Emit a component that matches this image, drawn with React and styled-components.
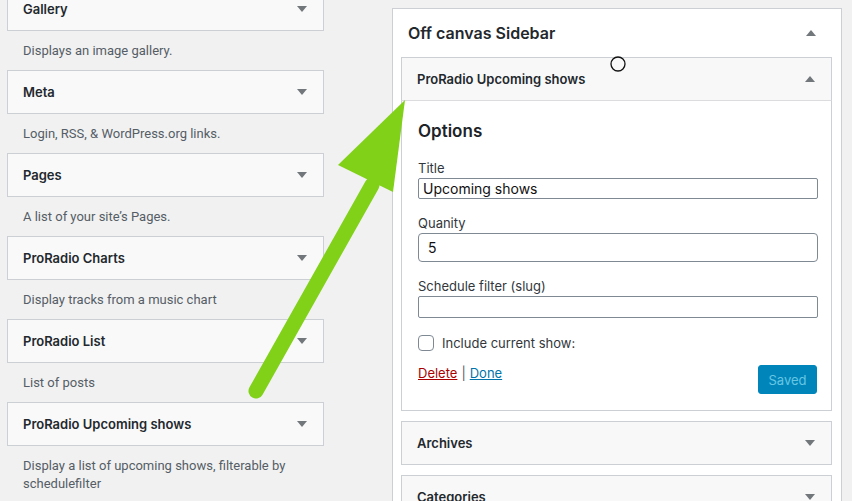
import React from "react";
import styled, { createGlobalStyle } from "styled-components";

const GlobalStyle = createGlobalStyle`
  html, body {
    margin: 0;
    padding: 0;
    height: 100%;
    overflow: hidden;
    background: #f1f1f1;
  }
  body {
    font-family: Inter, "Noto Sans", sans-serif;
    font-size: 13px;
    color: #23282d;
  }
`;

const available = [
  { title: "Gallery", desc: "Displays an image gallery." },
  { title: "Meta", desc: "Login, RSS, & WordPress.org links." },
  { title: "Pages", desc: "A list of your site’s Pages." },
  { title: "ProRadio Charts", desc: "Display tracks from a music chart" },
  { title: "ProRadio List", desc: "List of posts" },
  {
    title: "ProRadio Upcoming shows",
    desc: "Display a list of upcoming shows, filterable by schedulefilter",
  },
];

const Caret = ({ up }) => (
  <svg width="10" height="6" viewBox="0 0 10 6">
    <path d={up ? "M0 6 L5 0 L10 6 Z" : "M0 0 L10 0 L5 6 Z"} fill="#72777c" />
  </svg>
);

const App = () => (
  <>
    <GlobalStyle />
    <Page>
      <Available>
        {available.map((w) => (
          <div key={w.title}>
            <WidgetBar>
              <WidgetTitle>{w.title}</WidgetTitle>
              <Caret />
            </WidgetBar>
            <Desc>{w.desc}</Desc>
          </div>
        ))}
      </Available>

      <Sidebar>
        <SidebarHead>
          <SidebarTitle>Off canvas Sidebar</SidebarTitle>
          <Caret up />
        </SidebarHead>

        <Widget>
          <WidgetBar inner open>
            <WidgetTitle>ProRadio Upcoming shows</WidgetTitle>
            <Caret up />
          </WidgetBar>
          <WidgetBody>
            <Options>Options</Options>
            <Field>
              <Label>Title</Label>
              <TextInput h={21} r={2} defaultValue="Upcoming shows" />
            </Field>
            <Field>
              <Label>Quanity</Label>
              <TextInput h={29} r={4} pad={9} defaultValue="5" />
            </Field>
            <Field>
              <Label>Schedule filter (slug)</Label>
              <TextInput h={22} r={2} defaultValue="" />
            </Field>
            <CheckRow>
              <Check type="checkbox" />
              <span>Include current show:</span>
            </CheckRow>
            <Actions>
              <Links>
                <LinkText color="#a00">Delete</LinkText>
                <Sep>|</Sep>
                <LinkText color="#0073aa">Done</LinkText>
              </Links>
              <SavedButton>Saved</SavedButton>
            </Actions>
          </WidgetBody>
        </Widget>

        <Widget>
          <WidgetBar inner>
            <WidgetTitle>Archives</WidgetTitle>
            <Caret />
          </WidgetBar>
        </Widget>
        <Widget>
          <WidgetBar inner>
            <WidgetTitle>Categories</WidgetTitle>
            <Caret />
          </WidgetBar>
        </Widget>
      </Sidebar>

      <Overlay width="852" height="501" viewBox="0 0 852 501">
        <line
          x1="256"
          y1="391"
          x2="372"
          y2="185"
          stroke="#80d118"
          strokeWidth="15"
          strokeLinecap="round"
        />
        <polygon points="405,100 338,165 393,192" fill="#80d118" />
        <circle cx="618" cy="64" r="7" fill="none" stroke="#111" strokeWidth="1.3" />
      </Overlay>
    </Page>
  </>
);

const Page = styled.div`
  position: relative;
  display: flex;
  align-items: flex-start;
  height: 501px;
  overflow: hidden;
`;

const Available = styled.div`
  width: 317px;
  margin: -13px 0 0 7px;
  flex-shrink: 0;
`;

const WidgetBar = styled.div`
  box-sizing: border-box;
  height: 44px;
  display: flex;
  align-items: center;
  justify-content: space-between;
  padding: 0 16px 0 15px;
  background: ${(p) => (p.inner ? "#f8f8f8" : "#f9f9f9")};
  border: 1px solid #ccd0d4;
  ${(p) => p.open && "border-bottom: 1px solid #dcdcde;"}
`;

const WidgetTitle = styled.h3`
  margin: 0;
  font-size: 13px;
  font-weight: 600;
  color: #23282d;
`;

const Desc = styled.p`
  margin: 0;
  padding: 11px 16px 10px 16px;
  font-family: Roboto, "Noto Sans", sans-serif;
  font-size: 13px;
  line-height: 18px;
  color: #555d66;
`;

const Sidebar = styled.div`
  box-sizing: border-box;
  margin: 8px 0 0 68px;
  width: 450px;
  height: 520px;
  flex-shrink: 0;
  background: #fff;
  border: 1px solid #ccd0d4;
  padding: 0 9px 0 8px;
`;

const SidebarHead = styled.div`
  height: 48px;
  display: flex;
  align-items: center;
  justify-content: space-between;
  padding: 0 16px 0 7px;
`;

const SidebarTitle = styled.h2`
  margin: 0;
  font-size: 16px;
  font-weight: 600;
  color: #23282d;
`;

const Widget = styled.div`
  margin-bottom: 10px;
`;

const WidgetBody = styled.div`
  border: 1px solid #ccd0d4;
  border-top: none;
  background: #fff;
  padding: 0 13px 16px 16px;
`;

const Options = styled.h4`
  margin: 0;
  padding: 20px 0 18px;
  font-size: 17px;
  line-height: 20px;
  font-weight: 600;
  color: #1d2327;
`;

const Field = styled.div`
  margin-bottom: 15px;
`;

const Label = styled.label`
  display: block;
  font-size: 13px;
  line-height: 18px;
  margin-bottom: 1px;
  color: #32373c;
`;

const TextInput = styled.input`
  box-sizing: border-box;
  display: block;
  width: 400px;
  height: ${(p) => p.h}px;
  margin: 0;
  padding: 0 ${(p) => p.pad || 4}px;
  border: 1px solid #7e8993;
  border-radius: ${(p) => p.r}px;
  font-family: Inter, "Noto Sans", sans-serif;
  font-size: 14px;
  color: #111;
  background: #fff;
  outline: none;
`;

const CheckRow = styled.label`
  display: flex;
  align-items: center;
  gap: 8px;
  height: 16px;
  margin-top: 17px;
  font-size: 13px;
  color: #32373c;
`;

const Check = styled.input`
  appearance: none;
  box-sizing: border-box;
  width: 16px;
  height: 16px;
  margin: 0;
  border: 1px solid #7e8993;
  border-radius: 4px;
  background: #fff;
`;

const Actions = styled.div`
  display: flex;
  justify-content: space-between;
  align-items: flex-start;
  margin-top: 14px;
`;

const Links = styled.div`
  display: flex;
  gap: 4px;
  margin-top: -1px;
  line-height: 18px;
  font-size: 13px;
`;

const LinkText = styled.a`
  color: ${(p) => p.color};
  text-decoration: underline;
  cursor: pointer;
`;

const Sep = styled.span`
  color: #555d66;
`;

const SavedButton = styled.button`
  box-sizing: border-box;
  width: 59px;
  height: 29px;
  margin-right: 1px;
  border: 1px solid #0085ba;
  border-radius: 3px;
  background: #0085ba;
  color: #66c6e4;
  font-family: Inter, "Noto Sans", sans-serif;
  font-size: 13px;
`;

const Overlay = styled.svg`
  position: absolute;
  left: 0;
  top: 0;
  pointer-events: none;
`;

export default App;
